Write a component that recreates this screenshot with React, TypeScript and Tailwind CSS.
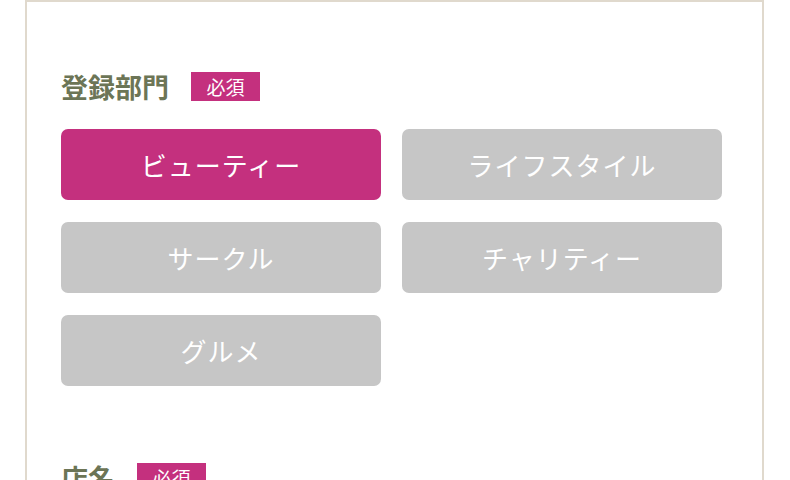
const categories = ["ビューティー", "ライフスタイル", "サークル", "チャリティー", "グルメ"];

function Required() {
  return (
    <span className="ml-[22px] inline-flex h-[29px] w-[69px] items-center justify-center bg-[#c4307e] text-[19px] leading-none text-white">
      必須
    </span>
  );
}

function FieldLabel({ label }: { label: string }) {
  return (
    <div className="flex h-[29px] items-center">
      <h2 className="text-[27px] font-bold leading-none text-[#6c7556]">{label}</h2>
      <Required />
    </div>
  );
}

export default function App() {
  const selected = "ビューティー";

  return (
    <div
      className="h-[480px] w-[790px] overflow-hidden bg-white"
      style={{ fontFamily: '"Noto Sans CJK JP", "Noto Sans", sans-serif' }}
    >
      <div className="ml-[25px] h-[520px] w-[739px] border-2 border-[#e0d9cd] bg-white pl-[34px] pt-[70px]">
        {/* 登録部門 */}
        <FieldLabel label="登録部門" />
        <div className="mt-[28px] grid w-[661px] grid-cols-2 gap-x-[21px] gap-y-[22px]">
          {categories.map((c) => (
            <button
              key={c}
              className={`flex h-[71px] items-center justify-center rounded-[7px] text-[26px] tracking-[1px] text-white ${
                c === selected ? "bg-[#c4307e]" : "bg-[#c6c6c6]"
              }`}
            >
              {c}
            </button>
          ))}
        </div>

        {/* 店名 */}
        <div className="mt-[77px]">
          <FieldLabel label="店名" />
        </div>
      </div>
    </div>
  );
}
